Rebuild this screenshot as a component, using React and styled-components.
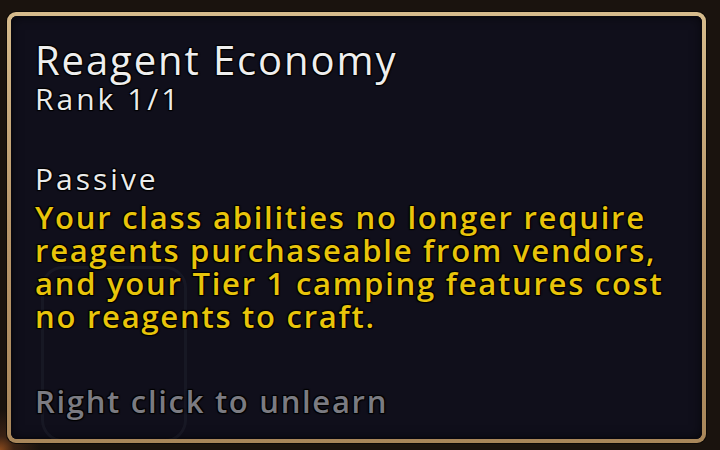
import React from "react";
import styled, { createGlobalStyle } from "styled-components";

const Global = createGlobalStyle`
  html, body { margin: 0; padding: 0; background: #1a130e; }
  body { width: 720px; height: 450px; overflow: hidden; }
`;

const Scene = styled.div`
  width: 720px;
  height: 450px;
  box-sizing: border-box;
  padding: 12px 14px 7px 7px;
  background: radial-gradient(circle at 0 450px, #8a4a1c 0, #3a2214 14px, #1a130e 40px);
`;

const Frame = styled.div`
  position: relative;
  width: 100%;
  height: 100%;
  box-sizing: border-box;
  border-radius: 9px;
  padding: 4px;
  background: linear-gradient(180deg, #d6bb8c 0%, #b9976a 50%, #a8865a 100%);
  box-shadow: 0 0 0 1px #0d0906;
`;

const Panel = styled.div`
  position: relative;
  height: 100%;
  box-sizing: border-box;
  border-radius: 6px;
  background: #100f1b;
  box-shadow: inset 0 0 0 2px #0a0910, inset 0 0 12px rgba(0,0,0,0.6);
  padding: 22px 20px 0 24px;
  display: flex;
  flex-direction: column;
  font-family: "Open Sans", "Noto Sans", sans-serif;
  text-shadow: 1px 1px 1px #000, -1px -1px 1px #000, 1px -1px 1px #000, -1px 1px 1px #000;
  overflow: hidden;
`;

const Ghost = styled.div`
  position: absolute;
  left: 30px;
  top: 250px;
  width: 140px;
  height: 170px;
  border-radius: 22px;
  border: 3px solid rgba(80, 84, 100, 0.13);
`;

const Title = styled.div`
  position: relative;
  color: #eeeeee;
  font-size: 40px;
  line-height: 44px;
  font-weight: 500;
  letter-spacing: 1.9px;
`;

const Sub = styled.div`
  position: relative;
  color: #ebebeb;
  font-size: 30px;
  line-height: 34px;
  font-weight: 500;
  letter-spacing: 3px;
  margin-top: ${(p) => p.$gap || 0}px;
`;

const Desc = styled.div`
  position: relative;
  color: #e8c40a;
  font-size: 31px;
  line-height: 33px;
  font-weight: 600;
  letter-spacing: 1.75px;
  margin-top: 5px;
`;

const Line = styled.div`
  white-space: nowrap;
`;

const Hint = styled.div`
  position: relative;
  color: #7b7b82;
  font-size: 31px;
  line-height: 34px;
  font-weight: 600;
  letter-spacing: 1.7px;
  margin-top: 51px;
`;

export default function App() {
  return (
    <>
      <Global />
      <Scene>
        <Frame>
          <Panel>
            <Ghost />
            <Title>Reagent Economy</Title>
            <Sub>Rank 1/1</Sub>
            <Sub $gap={46}>Passive</Sub>
            <Desc>
              <Line>Your class abilities no longer require</Line>
              <Line>reagents purchaseable from vendors,</Line>
              <Line>and your Tier 1 camping features cost</Line>
              <Line>no reagents to craft.</Line>
            </Desc>
            <Hint>Right click to unlearn</Hint>
          </Panel>
        </Frame>
      </Scene>
    </>
  );
}
